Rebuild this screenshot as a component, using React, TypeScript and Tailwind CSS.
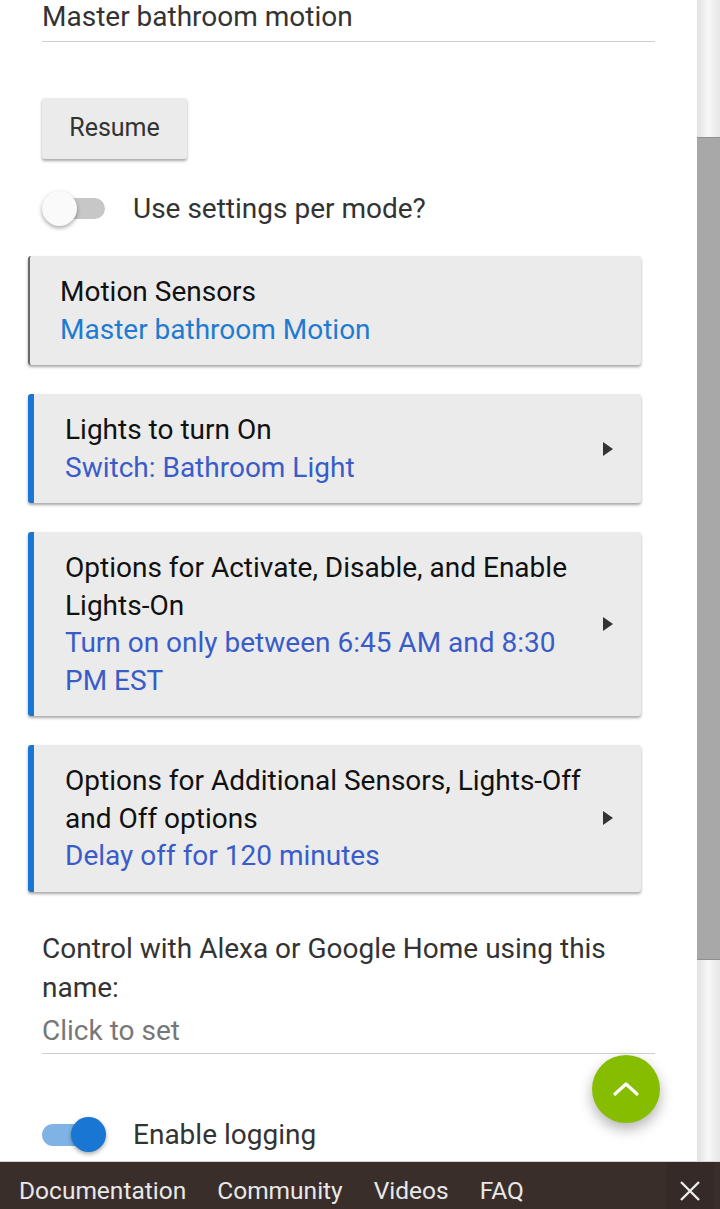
import React from 'react';

type Item = { title: string[]; detail: string[]; accent: boolean; arrow: boolean };

const items: Item[] = [
  { title: ['Motion Sensors'], detail: ['Master bathroom Motion'], accent: false, arrow: false },
  { title: ['Lights to turn On'], detail: ['Switch: Bathroom Light'], accent: true, arrow: true },
  {
    title: ['Options for Activate, Disable, and Enable', 'Lights-On'],
    detail: ['Turn on only between 6:45 AM and 8:30', 'PM EST'],
    accent: true,
    arrow: true,
  },
  {
    title: ['Options for Additional Sensors, Lights-Off', 'and Off options'],
    detail: ['Delay off for 120 minutes'],
    accent: true,
    arrow: true,
  },
];

function Toggle({ on }: { on: boolean }) {
  return (
    <div className="relative h-[35px] w-[63px] shrink-0">
      <div
        className={
          on
            ? 'absolute left-0 right-0 top-[7px] h-[22px] rounded-full bg-[#7fb3e5]'
            : 'absolute left-[6px] right-0 top-[7px] h-[21px] rounded-full bg-[#c7c7c7]'
        }
      />
      <div
        className={
          on
            ? 'absolute right-[-1px] top-0 h-[35px] w-[35px] rounded-full bg-[#1976d2] shadow-[0_2px_4px_rgba(0,0,0,0.35)]'
            : 'absolute left-0 top-0 h-[35px] w-[35px] rounded-full bg-[#fafafa] shadow-[0_2px_4px_rgba(0,0,0,0.35)]'
        }
      />
    </div>
  );
}

function Card({ item, first }: { item: Item; first: boolean }) {
  return (
    <div
      className={
        'flex items-center rounded-[3px] bg-[#ebebeb] py-[17px] pr-[28px] shadow-[0_2px_3px_rgba(0,0,0,0.35)] ' +
        (first ? 'mt-[29px] ' : 'mt-[29px] ') +
        (item.accent ? 'border-l-[6px] border-[#1976d2] pl-[31px]' : 'border-l-[2px] border-[#6a6a6a] pl-[30px]')
      }
    >
      <div className="flex-1 text-[28px] leading-[37.5px]">
        {item.title.map((t) => (
          <div key={t} className="text-[#111]">
            {t}
          </div>
        ))}
        {item.detail.map((t) => (
          <div key={t} className={item.accent ? 'text-[#3a5cc9]' : 'text-[#1f7bd2]'}>
            {t}
          </div>
        ))}
      </div>
      {item.arrow && (
        <svg width="10" height="14" viewBox="0 0 10 14" className="shrink-0">
          <polygon points="0,0 10,7 0,14" fill="#333" />
        </svg>
      )}
    </div>
  );
}

export default function App() {
  return (
    <div className="relative h-[1209px] w-[720px] overflow-hidden bg-white font-['Roboto',sans-serif]">
      <div className="flex h-full">
        <main className="min-w-0 flex-1 pl-[28px] pr-[56px]">
          <div className="-mr-[14px] ml-[14px] -mt-[2px] border-b border-[#cfcfcf] pb-[5px] text-[28px] leading-[37.5px] text-[#333]">
            Master bathroom motion
          </div>

          <button className="ml-[14px] mt-[56px] h-[61px] w-[145px] rounded-[3px] bg-[#ebebeb] text-[25px] text-[#333] shadow-[0_2px_3px_rgba(0,0,0,0.35)]">
            Resume
          </button>

          <div className="ml-[14px] mt-[31px] flex items-center gap-[28px]">
            <Toggle on={false} />
            <span className="text-[28px] leading-[37.5px] text-[#333]">Use settings per mode?</span>
          </div>

          {items.map((item, i) => (
            <Card key={item.title[0]} item={item} first={i === 0} />
          ))}

          <div className="-mr-[14px] ml-[14px] mt-[37px] border-b border-[#cfcfcf] pb-[3px] text-[28px] leading-[39px]">
            <div className="text-[#333]">Control with Alexa or Google Home using this</div>
            <div className="text-[#333]">name:</div>
            <div className="mt-[4px] text-[#777]">Click to set</div>
          </div>

          <div className="ml-[14px] mt-[62px] flex items-center gap-[28px]">
            <Toggle on={true} />
            <span className="text-[28px] leading-[37.5px] text-[#333]">Enable logging</span>
          </div>
        </main>

        <div className="flex h-full w-[23px] shrink-0 flex-col bg-gradient-to-r from-[#e2e2e2] via-[#f7f7f7] to-[#e6e6e6] pt-[137px]">
          <div className="h-[823px] border-y border-[#8f8f8f] bg-[#a8a8a8]" />
        </div>
      </div>

      <button className="absolute left-[592px] top-[1055px] flex h-[68px] w-[68px] items-center justify-center rounded-full bg-[#86bd00] shadow-[0_6px_14px_rgba(0,0,0,0.3)]">
        <svg width="28" height="16" viewBox="0 0 28 16">
          <polyline points="3,13 14,3 25,13" fill="none" stroke="#fff" strokeWidth="3.2" strokeLinecap="round" strokeLinejoin="round" />
        </svg>
      </button>

      <footer className="absolute bottom-0 left-0 right-0 flex h-[48px] border-t border-[#d5d5d5] bg-[#3a2e2b] pl-[19px] text-[24.5px] leading-[28px] text-[#e8e8e8]">
        <nav className="flex flex-1 gap-[31px] pt-[15px]">
          <span>Documentation</span>
          <span>Community</span>
          <span>Videos</span>
          <span>FAQ</span>
        </nav>
        <div className="mr-[6px] flex h-full w-[48px] items-start justify-center bg-[#352a27] pt-[18px]">
          <svg width="22" height="22" viewBox="0 0 22 22">
            <path d="M2 2 L20 20 M20 2 L2 20" stroke="#ececec" strokeWidth="2.4" />
          </svg>
        </div>
      </footer>
    </div>
  );
}
